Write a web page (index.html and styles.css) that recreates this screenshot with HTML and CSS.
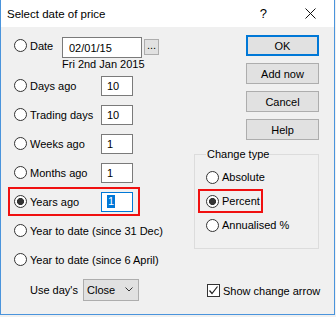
FILE: index.html
```html
<!DOCTYPE html>
<html lang="en">
<head>
<meta charset="UTF-8">
<title>Select date of price</title>
<link rel="stylesheet" href="styles.css">
</head>
<body>
<div class="window">
    <div class="titlebar">
        <span class="title">Select date of price</span>
        <span class="help-btn">?</span>
        <span class="close-btn">
            <svg width="11" height="11" viewBox="0 0 11 11"><path d="M0.5 0.5 L10.5 10.5 M10.5 0.5 L0.5 10.5" stroke="#111" stroke-width="1" fill="none"/></svg>
        </span>
    </div>

    <div class="content">
        <div class="options">
            <div class="row date-row">
                <label class="opt opt-date"><input type="radio" name="when"><span>Date</span></label>
                <input class="edit edit-date" type="text" value="02/01/15">
                <button class="dots">...</button>
            </div>
            <div class="date-text">Fri 2nd Jan 2015</div>

            <div class="row">
                <label class="opt"><input type="radio" name="when"><span>Days ago</span></label>
                <input class="edit" type="text" value="10">
            </div>
            <div class="row">
                <label class="opt"><input type="radio" name="when"><span>Trading days</span></label>
                <input class="edit" type="text" value="10">
            </div>
            <div class="row">
                <label class="opt"><input type="radio" name="when"><span>Weeks ago</span></label>
                <input class="edit" type="text" value="1">
            </div>
            <div class="row">
                <label class="opt"><input type="radio" name="when"><span>Months ago</span></label>
                <input class="edit" type="text" value="1">
            </div>
            <div class="row marked">
                <label class="opt"><input type="radio" name="when" checked><span>Years ago</span></label>
                <div class="edit focused"><span class="selected">1</span></div>
            </div>
            <div class="row">
                <label class="opt"><input type="radio" name="when"><span>Year to date (since 31 Dec)</span></label>
            </div>
            <div class="row">
                <label class="opt"><input type="radio" name="when"><span>Year to date (since 6 April)</span></label>
            </div>
            <div class="row use-row">
                <span class="use-label">Use day's</span>
                <div class="combo">
                    <span>Close</span>
                    <svg width="8" height="5" viewBox="0 0 8 5"><polyline points="0.5,0.5 4,4 7.5,0.5" stroke="#333" stroke-width="1" fill="none"/></svg>
                </div>
            </div>
        </div>

        <div class="side">
            <div class="buttons">
                <button class="btn default">OK</button>
                <button class="btn">Add now</button>
                <button class="btn">Cancel</button>
                <button class="btn">Help</button>
            </div>

            <fieldset class="group">
                <legend>Change type</legend>
                <label class="grp-opt"><input type="radio" name="change"><span>Absolute</span></label>
                <label class="grp-opt marked"><input type="radio" name="change" checked><span>Percent</span></label>
                <label class="grp-opt"><input type="radio" name="change"><span>Annualised %</span></label>
            </fieldset>

            <label class="check-row">
                <span class="checkbox">
                    <svg width="11" height="11" viewBox="0 0 11 11"><polyline points="1.5,5.5 4,8.5 9.5,1.5" stroke="#222" stroke-width="1.2" fill="none"/></svg>
                </span>
                <span>Show change arrow</span>
            </label>
        </div>
    </div>
</div>
</body>
</html>
```

FILE: styles.css
```css
body {
    margin: 0;
    padding: 0;
    width: 336px;
    height: 317px;
    background-color: #f0f0f0;
    font-family: "Liberation Sans", Arial, sans-serif;
    font-size: 11px;
    color: #000;
    overflow: hidden;
}

.window {
    width: 335px;
    height: 315px;
    box-sizing: border-box;
    border: 1px solid #4a94dc;
    border-top: none;
    background-color: #f0f0f0;
    display: flex;
    flex-direction: column;
}

.titlebar {
    height: 27px;
    background-color: #fff;
    display: flex;
    align-items: center;
    flex-shrink: 0;
}

.title {
    font-size: 11.5px;
    padding-left: 6px;
}

.help-btn {
    margin-left: auto;
    font-size: 13px;
    margin-right: 38px;
}

.close-btn {
    display: flex;
    margin-right: 18px;
}

.content {
    display: flex;
    flex: 1;
}

/* left column */
.options {
    padding-left: 13px;
    display: flex;
    flex-direction: column;
    align-items: flex-start;
}

.row {
    display: flex;
    align-items: center;
    height: 29px;
}

.row.marked {
    position: relative;
}

.row.marked::after,
.grp-opt.marked::after {
    content: '';
    position: absolute;
    top: 0;
    bottom: 0;
    border: 2px solid #f01010;
}

.row.marked::after {
    left: -6px;
    right: -7px;
}

.opt {
    display: flex;
    align-items: center;
    width: 87px;
    white-space: nowrap;
}

.opt-date {
    width: 48px;
    align-self: flex-start;
    margin-top: 2px;
}

.date-row {
    margin-top: 10px;
    height: 21px;
    align-items: flex-start;
}

input[type="radio"] {
    appearance: none;
    -webkit-appearance: none;
    width: 13px;
    height: 13px;
    margin: 0 3px 0 0;
    border: 1px solid #333;
    border-radius: 50%;
    background: #fff;
    flex-shrink: 0;
}

input[type="radio"]:checked {
    background: radial-gradient(circle, #333 0 3.3px, #fff 3.8px);
}

.edit {
    width: 32px;
    height: 20px;
    box-sizing: border-box;
    border: 1px solid #7a7a7a;
    background: #fff;
    font-family: inherit;
    font-size: 11px;
    padding: 0 0 0 5px;
    margin: 0;
    display: flex;
    align-items: center;
    outline: none;
}

.edit-date {
    width: 80px;
    height: 21px;
    padding-left: 6px;
}

.edit.focused {
    border-color: #0078d7;
}

.selected {
    background: #0078d7;
    color: #fff;
    line-height: 13px;
    padding: 0 1px;
}

.dots {
    width: 15px;
    height: 16px;
    margin: 2px 0 0 2px;
    padding: 0;
    border: 1px solid #adadad;
    background: #e1e1e1;
    font-family: inherit;
    font-size: 11px;
    line-height: 18px;
    display: flex;
    justify-content: center;
    align-items: flex-end;
}

.date-text {
    margin-left: 48px;
    height: 13px;
    line-height: 13px;
}

.use-row {
    margin-top: 1px;
}

.use-label {
    margin-left: 16px;
    width: 53px;
}

.combo {
    width: 56px;
    height: 22px;
    box-sizing: border-box;
    border: 1px solid #adadad;
    background: #e1e1e1;
    display: flex;
    align-items: center;
    justify-content: space-between;
    padding: 0 5px 0 3px;
}

/* right column */
.side {
    margin-left: auto;
    width: 125px;
    margin-right: 15px;
    display: flex;
    flex-direction: column;
}

.buttons {
    display: flex;
    flex-direction: column;
    align-items: flex-end;
    gap: 7px;
    padding-top: 8px;
}

.btn {
    width: 73px;
    height: 21px;
    box-sizing: border-box;
    border: 1px solid #adadad;
    background: #e1e1e1;
    font-family: inherit;
    font-size: 11px;
    color: #000;
    padding: 0;
}

.btn.default {
    border: 2px solid #0078d7;
}

.group {
    margin: 8px 0 0 0;
    border: 1px solid #dcdcdc;
    padding: 4px 0 11px 11px;
    display: flex;
    flex-direction: column;
}

.group legend {
    padding: 0 1px;
    line-height: 13px;
}

.grp-opt {
    display: flex;
    align-items: center;
    height: 24px;
    align-self: flex-start;
    position: relative;
}

.grp-opt.marked::after {
    left: -8px;
    right: -3px;
}

.check-row {
    display: flex;
    align-items: center;
    margin-top: 35px;
    padding-left: 13px;
    white-space: nowrap;
}

.checkbox {
    width: 13px;
    height: 13px;
    box-sizing: border-box;
    border: 1px solid #333;
    background: #fff;
    margin-right: 3px;
    flex-shrink: 0;
    display: flex;
    align-items: center;
    justify-content: center;
}
```
